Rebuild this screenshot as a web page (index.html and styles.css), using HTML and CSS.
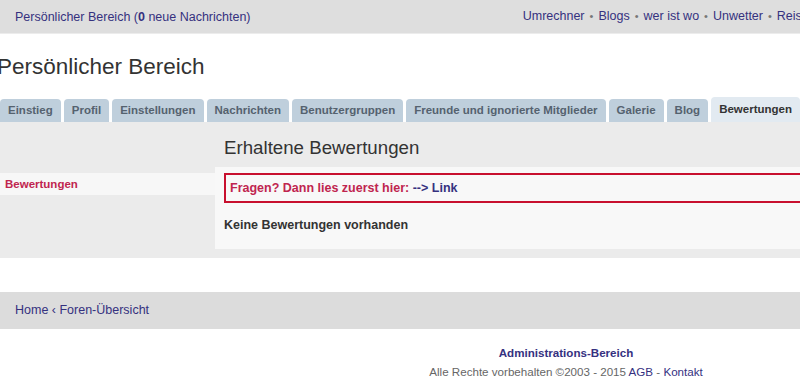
FILE: index.html
```html
<!DOCTYPE html>
<html lang="de">
<head>
    <meta charset="UTF-8">
    <meta name="viewport" content="width=device-width, initial-scale=1.0">
    <title>Persönlicher Bereich</title>
    <link rel="stylesheet" href="styles.css">
</head>
<body>
<div class="page">

    <div class="topbar">
        <a href="#" class="user-link">Persönlicher Bereich (<b>0</b> neue Nachrichten)</a>
        <nav class="quicklinks">
            <a href="#">Umrechner</a><span class="dot">•</span>
            <a href="#">Blogs</a><span class="dot">•</span>
            <a href="#">wer ist wo</a><span class="dot">•</span>
            <a href="#">Unwetter</a><span class="dot">•</span>
            <a href="#">Reisewetter</a><span class="dot">•</span>
            <a href="#">Wetterkarten</a><span class="dot">•</span>
            <a href="#">Kalender</a><span class="dot">•</span>
            <a href="#">Suche</a><span class="dot">•</span>
            <a href="#">FAQ</a><span class="dot">•</span>
            <a href="#">Hilfe</a>
        </nav>
    </div>

    <h1 class="page-title">Persönlicher Bereich</h1>

    <ul class="tabs">
        <li><a href="#">Einstieg</a></li>
        <li><a href="#">Profil</a></li>
        <li><a href="#">Einstellungen</a></li>
        <li><a href="#">Nachrichten</a></li>
        <li><a href="#">Benutzergruppen</a></li>
        <li><a href="#">Freunde und ignorierte Mitglieder</a></li>
        <li><a href="#">Galerie</a></li>
        <li><a href="#">Blog</a></li>
        <li class="active"><a href="#">Bewertungen</a></li>
    </ul>

    <div class="panel">
        <aside class="sidebar">
            <a href="#" class="side-item">Bewertungen</a>
        </aside>
        <main class="main">
            <h2>Erhaltene Bewertungen</h2>
            <div class="inner">
                <div class="notice">Fragen? Dann lies zuerst hier: <a href="#">--&gt; Link</a></div>
                <p class="empty">Keine Bewertungen vorhanden</p>
            </div>
        </main>
    </div>

    <div class="breadcrumb">
        <a href="#">Home</a> ‹ <a href="#">Foren-Übersicht</a>
    </div>

    <footer class="footer">
        <a href="#" class="admin">Administrations-Bereich</a>
        <p>Alle Rechte vorbehalten ©2003 - 2015 <a href="#">AGB</a> - <a href="#">Kontakt</a></p>
    </footer>

</div>
</body>
</html>
```

FILE: styles.css
```css
* {
    margin: 0;
    padding: 0;
    box-sizing: border-box;
}

html, body {
    overflow: hidden;
    background-color: #fff;
    font-family: "Liberation Sans", Arial, Helvetica, sans-serif;
    color: #333;
}

a {
    color: #35317f;
    text-decoration: none;
}

.page {
    width: 1132px;
}

.topbar {
    height: 34px;
    background-color: #dedede;
    border-bottom: 1px solid #ececec;
    padding: 0 13px 0 15px;
    display: flex;
    align-items: center;
    justify-content: space-between;
    font-size: 12.5px;
    white-space: nowrap;
}

.quicklinks {
    display: flex;
    gap: 5px;
}

.dot {
    color: #777;
    font-size: 11px;
    line-height: 15px;
}

.page-title {
    font-weight: 400;
    font-size: 22.5px;
    color: #333;
    margin: 20px 0 0 -3px;
    height: 45px;
}

.tabs {
    list-style: none;
    display: flex;
    gap: 3px;
    height: 23px;
    align-items: flex-end;
}

.tabs li a {
    display: block;
    padding: 0 8px;
    height: 23px;
    line-height: 22px;
    background-color: #bfcfdc;
    border-radius: 4px 4px 0 0;
    color: #55626f;
    font-weight: 700;
    font-size: 11.5px;
}

.tabs li.active a {
    height: 25px;
    line-height: 25px;
    background-color: #e2eaf1;
    color: #333;
}

.panel {
    display: flex;
    background-color: #ebebeb;
    height: 136px;
}

.sidebar {
    width: 215px;
    padding-top: 51px;
}

.side-item {
    display: block;
    height: 22px;
    line-height: 22px;
    padding-left: 5px;
    background-color: #f7f7f7;
    color: #c0254f;
    font-weight: 700;
    font-size: 11.5px;
}

.main {
    flex: 1;
}

.main h2 {
    font-weight: 400;
    font-size: 18.7px;
    color: #333;
    padding: 15px 0 0 9px;
    height: 45px;
}

.inner {
    background-color: #f8f8f8;
    padding: 6px 9px 0;
    height: 82px;
}

.notice {
    border: 2px solid #c8102e;
    height: 30px;
    line-height: 26px;
    padding-left: 4px;
    color: #c0254f;
    font-weight: 700;
    font-size: 12.5px;
}

.notice a {
    color: #35317f;
}

.empty {
    margin-top: 15px;
    font-weight: 700;
    font-size: 12.5px;
    color: #333;
}

.breadcrumb {
    margin-top: 34px;
    height: 37px;
    line-height: 37px;
    background-color: #dcdcdc;
    padding-left: 15px;
    font-size: 12.5px;
    color: #35317f;
}

.footer {
    padding-top: 17px;
    text-align: center;
    font-size: 11.6px;
}

.admin {
    display: block;
    font-weight: 700;
    line-height: 14px;
}

.footer p {
    margin-top: 5px;
    color: #666;
    font-size: 11.6px;
    line-height: 14px;
}
```
